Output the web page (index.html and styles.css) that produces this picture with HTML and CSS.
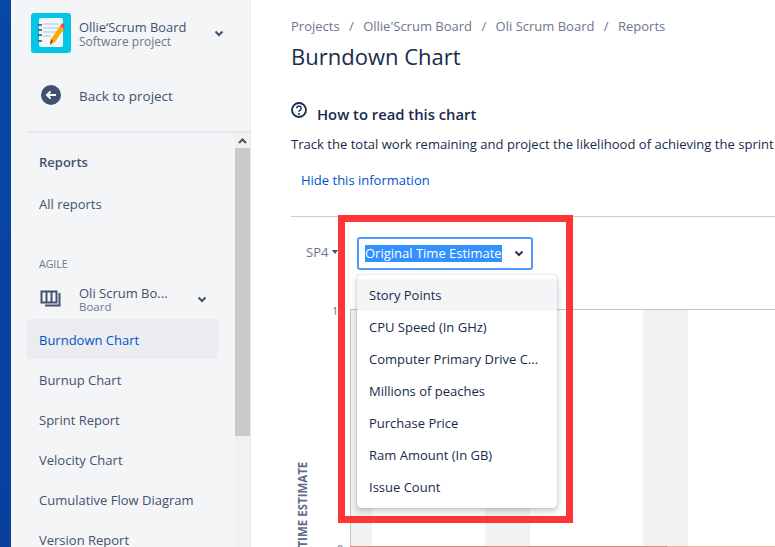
FILE: index.html
```html
<!DOCTYPE html>
<html lang="en">
<head>
<meta charset="utf-8">
<title>Burndown Chart</title>
<link rel="stylesheet" href="styles.css">
</head>
<body>
<div class="app">
  <div class="rail"></div>
  <aside class="sidebar">
    <header class="project">
      <svg class="logo" viewBox="0 0 40 40" width="40" height="40">
        <rect width="40" height="40" rx="3" fill="#00c7e6"/>
        <rect x="8" y="5" width="24" height="29" rx="2" fill="#f4f7fa"/>
        <path d="M12 11h16M12 15h16M12 19h12M12 23h8" stroke="#c5d3e6" stroke-width="1.4"/>
        <path d="M7 12h4M7 17h4M7 22h4M7 28h4" stroke="#344563" stroke-width="1.5"/>
        <path d="M29 13l4 3-9 13-5 3 1-6z" fill="#ffab00"/>
        <path d="M29 13l2-3 3 2.500-1 3.500z" fill="#ef4d4d"/>
        <path d="M19 32l1-6 2 2z" fill="#6b4f2a"/>
      </svg>
      <div class="project-text">
        <div class="project-name">Ollie‘Scrum Board</div>
        <div class="project-type">Software project</div>
      </div>
      <svg class="chev chev-project" viewBox="0 0 10 7" width="10" height="7"><path d="M1.500 1.500 5 5l3.500-3.500" fill="none" stroke="#42526e" stroke-width="2"/></svg>
    </header>
    <a class="back">
      <svg viewBox="0 0 20 20" width="20" height="20"><circle cx="10" cy="10" r="10" fill="#42526e"/><path d="M15 10H6M9.500 6.500 6 10l3.500 3.500" fill="none" stroke="#fff" stroke-width="2"/></svg>
      <span>Back to project</span>
    </a>
    <div class="divider"></div>
    <div class="scrollarea">
      <nav class="nav">
        <div class="nav-title">Reports</div>
        <div class="nav-link all">All reports</div>
        <div class="nav-group">AGILE</div>
        <div class="board">
          <svg viewBox="0 0 22 18" width="22" height="18"><path d="M1.500 1.500h15v11h-15zM6.500 1.500v11M11.500 1.500v11" fill="none" stroke="#42526e" stroke-width="2"/><path d="M19.500 3v12.500H5" fill="none" stroke="#42526e" stroke-width="2"/></svg>
          <div class="board-text">
            <div class="board-name">Oli Scrum Bo...</div>
            <div class="board-type">Board</div>
          </div>
          <svg class="chev" viewBox="0 0 10 7" width="10" height="7"><path d="M1.500 1.500 5 5l3.500-3.500" fill="none" stroke="#42526e" stroke-width="2"/></svg>
        </div>
        <div class="nav-item active">Burndown Chart</div>
        <div class="nav-item">Burnup Chart</div>
        <div class="nav-item">Sprint Report</div>
        <div class="nav-item">Velocity Chart</div>
        <div class="nav-item">Cumulative Flow Diagram</div>
        <div class="nav-item">Version Report</div>
      </nav>
      <div class="scrollbar">
        <div class="scroll-up"><svg viewBox="0 0 9 6" width="9" height="6"><path d="M1 5 4.500 1.500 8 5" fill="none" stroke="#505050" stroke-width="2"/></svg></div>
        <div class="scroll-thumb"></div>
      </div>
    </div>
  </aside>
  <main class="main">
    <div class="crumbs">
      <span>Projects</span><i>/</i><span>Ollie'Scrum Board</span><i>/</i><span>Oli Scrum Board</span><i>/</i><span>Reports</span>
    </div>
    <h1 class="title">Burndown Chart</h1>
    <div class="info-head">
      <svg viewBox="0 0 16 16" width="16" height="16"><circle cx="8" cy="8" r="7" fill="none" stroke="#172b4d" stroke-width="1.800"/><path d="M5.800 6.300a2.200 2.200 0 1 1 3.400 1.800c-.8.500-1.200.9-1.200 1.700" fill="none" stroke="#172b4d" stroke-width="1.500"/><circle cx="8" cy="12" r="1" fill="#172b4d"/></svg>
      <h2>How to read this chart</h2>
    </div>
    <p class="info-text">Track the total work remaining and project the likelihood of achieving the sprint goal. This helps your team manage its progress and respond accordingly.</p>
    <a class="hide">Hide this information</a>
    <div class="rule"></div>
    <section class="chart">
      <div class="controls">
        <div class="sprint">SP4<span class="caret"></span></div>
        <div class="select"><span class="select-value">Original Time Estimate</span>
          <svg viewBox="0 0 10 7" width="10" height="7"><path d="M1.500 1.500 5 5l3.500-3.500" fill="none" stroke="#253858" stroke-width="2"/></svg>
        </div>
      </div>
      <svg class="plot" width="484" height="331" viewBox="0 0 484 331">
        <rect x="60" y="93" width="21" height="237" fill="#f2f2f2"/>
        <rect x="194" y="93" width="45" height="237" fill="#f2f2f2"/>
        <rect x="352" y="93" width="45" height="237" fill="#f2f2f2"/>
        <path d="M59 92.500H484" stroke="#c4c4c4"/>
        <path d="M59.500 92V330" stroke="#c4c4c4"/>
        <path d="M59 329.500H376" stroke="#df8a84"/>
        <path d="M376 329.500H484" stroke="#f6aaa3"/>
        <text class="tick" x="41" y="98">1</text>
        <text class="tick" x="46" y="336">0</text>
        <text class="axis" transform="translate(15.500 390) rotate(-90)">ORIGINAL TIME ESTIMATE</text>
      </svg>
      <ul class="menu">
        <li class="hover">Story Points</li>
        <li>CPU Speed (In GHz)</li>
        <li>Computer Primary Drive C...</li>
        <li>Millions of peaches</li>
        <li>Purchase Price</li>
        <li>Ram Amount (In GB)</li>
        <li>Issue Count</li>
      </ul>
      <div class="highlight"></div>
    </section>
  </main>
</div>
</body>
</html>
```
FILE: styles.css
```css
* { box-sizing: border-box; }
html, body { margin: 0; height: 100%; overflow: hidden; }
body { font-family: "Open Sans", "Noto Sans", "Liberation Sans", sans-serif; font-size: 13px; color: #172b4d; background: #fff; }
.app { display: flex; height: 547px; width: 775px; overflow: hidden; }
.rail { width: 11px; flex: none; background: linear-gradient(180deg, #0747a6, #0a3f9c); }
.sidebar { width: 240px; flex: none; background: #f4f5f7; border-right: 1px solid #ebecf0; display: flex; flex-direction: column; color: #42526e; }
.project { height: 66px; padding: 13px 0 0 20px; display: flex; align-items: flex-start; flex: none; }
.logo { flex: none; }
.project-text { margin-left: 8px; padding-top: 5px; width: 130px; }
.project-name { font-size: 12.900px; line-height: 18px; color: #42526e; }
.project-type { font-size: 12px; line-height: 12px; color: #6b778c; }
.chev-project { margin: 17px 0 0 5px; }
.back { height: 65px; padding: 20px 0 0 30px; display: flex; align-items: flex-start; gap: 18px; flex: none; line-height: 20px; font-size: 13.500px; }
.back svg { margin-top: -1px; }
.divider { height: 2px; margin-left: 16px; background: #e4e6ec; flex: none; }
.scrollarea { flex: 1; display: flex; min-height: 0; }
.nav { width: 224px; flex: none; padding: 0 17px 0 16px; }
.nav-title { padding: 19px 12px 0; line-height: 20px; font-weight: 600; color: #42526e; }
.nav-link.all { padding: 22px 12px 0; line-height: 20px; }
.nav-group { padding: 42px 12px 0; font-size: 10.500px; line-height: 16px; color: #6b778c; }
.board { display: flex; align-items: center; height: 38px; margin: 8px 0 1px; padding-left: 13px; }
.board-text { margin-left: 17px; width: 118px; }
.board-name { font-size: 13px; line-height: 16px; }
.board-type { font-size: 11.500px; line-height: 12px; color: #6b778c; }
.nav-item { height: 40px; line-height: 42px; padding-left: 12px; border-radius: 3px; }
.nav-item.active { background: #ebecf0; color: #0052cc; }
.scrollbar { width: 15px; flex: none; background: #f1f1f1; }
.scroll-up { height: 15px; display: flex; align-items: center; justify-content: center; }
.scroll-thumb { height: 288px; background: #c9c9c9; }
.main { flex: 1; min-width: 0; padding: 16px 0 0 40px; overflow: hidden; }
.crumbs { display: flex; gap: 9.400px; line-height: 20px; color: #6b778c; white-space: nowrap; }
.crumbs i { font-style: normal; }
.title { margin: 6px 0 0; font-size: 22px; line-height: 28px; font-weight: 400; color: #172b4d; }
.info-head { display: flex; align-items: flex-start; gap: 10px; margin-top: 32px; }
.info-head h2 { margin: 0; padding-top: 1px; font-size: 14.800px; line-height: 22px; font-weight: 600; }
.info-text { margin: 9px 0 0; font-size: 13.050px; line-height: 20px; white-space: nowrap; }
.hide { display: block; margin: 16px 0 0 10px; line-height: 20px; color: #0052cc; }
.rule { height: 1px; margin-top: 26px; background: #ccc; }
.chart { position: relative; height: 331px; margin-top: 0; }
.controls { display: flex; align-items: center; padding: 20px 0 0 15px; }
.sprint { width: 51px; height: 33px; padding-bottom: 3px; color: #6b778c; display: flex; align-items: center; }
.caret { width: 0; height: 0; margin-left: 4px; border: 3px solid transparent; border-top: 4px solid #42526e; border-bottom: 0; }
.select { width: 176px; height: 33px; border: 2px solid #4c9aff; border-radius: 3px; background: #fff; display: flex; align-items: center; justify-content: space-between; padding: 0 7px 0 6px; }
.select-value { background: #3390ff; color: #fff; line-height: 17px; white-space: nowrap; }
.plot { position: absolute; left: 0; top: 0; }
.tick { font-size: 11px; fill: #6b778c; font-family: "Open Sans", sans-serif; }
.axis { font-size: 11.500px; font-weight: 700; fill: #5e6c84; font-family: "Open Sans", sans-serif; }
.menu { position: absolute; left: 66px; top: 58px; width: 200px; height: 233px; margin: 0; padding: 4px 0 0; list-style: none; background: #fff; border-radius: 4px; box-shadow: 0 0 1px rgba(9,30,66,.45), 0 3px 6px rgba(9,30,66,.25); }
.menu li { height: 32px; line-height: 32px; padding-left: 12px; color: #172b4d; white-space: nowrap; }
.menu li.hover { background: #f4f5f7; }
.highlight { position: absolute; left: 47px; top: -2px; width: 235px; height: 308px; border: 7px solid #ff3636; pointer-events: none; }
```
